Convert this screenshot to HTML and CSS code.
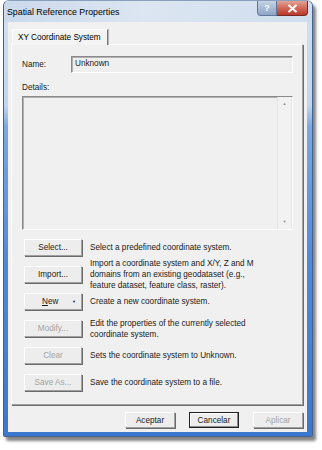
FILE: index.html
```html
<!DOCTYPE html>
<html lang="en">

<head>
    <meta charset="UTF-8">
    <title>Spatial Reference Properties</title>
    <link rel="stylesheet" href="styles.css">
</head>

<body>
    <div class="window">
        <div class="titlebar">
            <span class="title">Spatial Reference Properties</span>
            <div class="caption">
                <span class="cap-help">?</span>
                <span class="cap-close">
                    <svg width="11" height="9" viewBox="0 0 11 9">
                        <path d="M1.5 1 L9.5 8 M9.5 1 L1.5 8" stroke="#fff" stroke-width="2" />
                    </svg>
                </span>
            </div>
        </div>

        <div class="client">
            <div class="tabs">
                <div class="tab">XY Coordinate System</div>
            </div>

            <div class="panel">
                <div class="name-row">
                    <span class="label">Name:</span>
                    <div class="field">Unknown</div>
                </div>

                <div class="details-label">Details:</div>
                <div class="details">
                    <div class="details-text"></div>
                    <div class="scroll">
                        <span class="arrow">&#9650;</span>
                        <span class="arrow">&#9660;</span>
                    </div>
                </div>

                <div class="actions">
                    <div class="action">
                        <div class="but">Select...</div>
                        <p>Select a predefined coordinate system.</p>
                    </div>
                    <div class="action">
                        <div class="but">Import...</div>
                        <p>Import a coordinate system and X/Y, Z and M<br>domains from an existing geodataset (e.g.,<br>feature dataset, feature class, raster).</p>
                    </div>
                    <div class="action">
                        <div class="but but-menu"><span><u>N</u>ew</span><span class="drop">&#9660;</span></div>
                        <p>Create a new coordinate system.</p>
                    </div>
                    <div class="action">
                        <div class="but off">Modify...</div>
                        <p>Edit the properties of the currently selected<br>coordinate system.</p>
                    </div>
                    <div class="action">
                        <div class="but off">Clear</div>
                        <p>Sets the coordinate system to Unknown.</p>
                    </div>
                    <div class="action">
                        <div class="but off">Save As...</div>
                        <p>Save the coordinate system to a file.</p>
                    </div>
                </div>
            </div>

            <div class="footer">
                <div class="but dlg">Aceptar</div>
                <div class="but dlg default">Cancelar</div>
                <div class="but dlg off">Aplicar</div>
            </div>
        </div>
    </div>
</body>

</html>
```

FILE: styles.css
```css
html,
body {
    margin: 0;
    width: 322px;
    height: 450px;
    background-color: #fff;
    font-family: "Liberation Sans", Arial, sans-serif;
    font-size: 8.2px;
    color: #1a1a1a;
}

.window {
    margin-left: 3px;
    width: 310px;
    height: 437px;
    box-sizing: border-box;
    display: flex;
    flex-flow: column;
    background: linear-gradient(to bottom, #d3e1f1 0%, #c2d5ec 24%, #7aa8e2 29%, #4f8ad8 60%, #3a78d0 100%);
    border: 1px solid #48618a;
    border-top-color: #8d9fb8;
    border-radius: 6px 6px 2px 2px;
    box-shadow: 3px 4px 3px rgba(50, 50, 50, 0.6);
}

.titlebar {
    height: 21px;
    display: flex;
    justify-content: space-between;
    background: linear-gradient(to right, #cad9ec 0%, #dce6f2 45%, #d0ddee 100%);
    border-radius: 5px 5px 0 0;
}

.title {
    font-size: 8.8px;
    color: #000;
    padding: 6px 0 0 3px;
}

.caption {
    display: flex;
    margin-right: 4px;
    height: 15px;
}

.cap-help {
    width: 20px;
    box-sizing: border-box;
    display: flex;
    justify-content: center;
    align-items: center;
    color: #fff;
    font-weight: bold;
    font-size: 9px;
    background: linear-gradient(to bottom, #c4d2e4 0%, #a9bcd6 50%, #8ea5c4 100%);
    border: 1px solid #5f7696;
    border-top: none;
    border-radius: 0 0 0 4px;
}

.cap-close {
    width: 31px;
    box-sizing: border-box;
    display: flex;
    justify-content: center;
    align-items: center;
    background: linear-gradient(to bottom, #e3a297 0%, #d1685a 50%, #b8392a 100%);
    border: 1px solid #7a2a22;
    border-top: none;
    border-left: none;
    border-radius: 0 0 4px 0;
}

.client {
    flex: 1;
    margin: 0 5px 4px 4px;
    background-color: #f0f0f0;
    display: flex;
    flex-flow: column;
    padding: 7px 4px 0 3px;
}

.tabs {
    display: flex;
    padding-left: 1px;
}

.tab {
    height: 16px;
    box-sizing: border-box;
    padding: 3px 6px 0 5px;
    background-color: #f4f4f4;
    border: 1px solid #fff;
    border-right: 1px solid #777;
    border-bottom: none;
    box-shadow: 1px 0 0 #b4b4b4;
    margin-bottom: -1px;
    position: relative;
    color: #000;
}

.panel {
    flex: 1;
    border: 1px solid #a0a0a0;
    border-top-color: #fff;
    border-left-color: #fff;
    box-shadow: 1px 1px 0 #6d6d6d;
    padding: 11px 9px 0 10px;
}

.name-row {
    display: flex;
    align-items: center;
}

.label {
    width: 49px;
}

.field {
    flex: 1;
    height: 17px;
    box-sizing: border-box;
    padding: 2px 0 0 3px;
    border: 1px solid #fff;
    border-top-color: #8a8a8a;
    border-left-color: #8a8a8a;
    box-shadow: inset 1px 1px 0 #b0b0b0;
    background-color: #efefef;
}

.details-label {
    margin-top: 9px;
    line-height: 11px;
}

.details {
    margin-top: 3px;
    height: 134px;
    box-sizing: border-box;
    display: flex;
    border: 1px solid #fff;
    border-top-color: #8a8a8a;
    border-left-color: #8a8a8a;
    box-shadow: inset 1px 1px 0 #b0b0b0;
}

.details-text {
    flex: 1;
}

.scroll {
    width: 13px;
    display: flex;
    flex-flow: column;
    justify-content: space-between;
    align-items: center;
    padding: 4px 0 5px;
    border-left: 1px solid #e4e4e4;
    border-right: 1px solid #e4e4e4;
    background-color: #f2f2f2;
}

.arrow {
    font-size: 4px;
    color: #8c8c8c;
}

.actions {
    margin-top: 4px;
    display: flex;
    flex-flow: column;
}

.action {
    height: 27px;
    display: flex;
    align-items: center;
    padding-left: 2px;
}

.action p {
    margin: 0 0 0 8px;
    line-height: 11px;
}

.but {
    width: 58px;
    height: 17px;
    box-sizing: border-box;
    display: flex;
    justify-content: center;
    align-items: center;
    background-color: #ededed;
    border: 1px solid #fff;
    border-right-color: #a0a0a0;
    border-bottom-color: #a0a0a0;
    box-shadow: 1px 1px 0 #6a6a6a;
    color: #1a1a1a;
    flex-shrink: 0;
}

.but-menu {
    justify-content: space-between;
    padding: 0 5px 0 17px;
}

.drop {
    font-size: 4px;
}

.off {
    color: #a3a3a3;
}

.footer {
    display: flex;
    justify-content: flex-end;
    gap: 14px;
    padding: 7px 0 4px;
}

.dlg {
    width: 50px;
    height: 16px;
}

.default {
    border-color: #222;
    box-shadow: inset -1px -1px 0 #8a8a8a, inset 1px 1px 0 #fff;
}
```
